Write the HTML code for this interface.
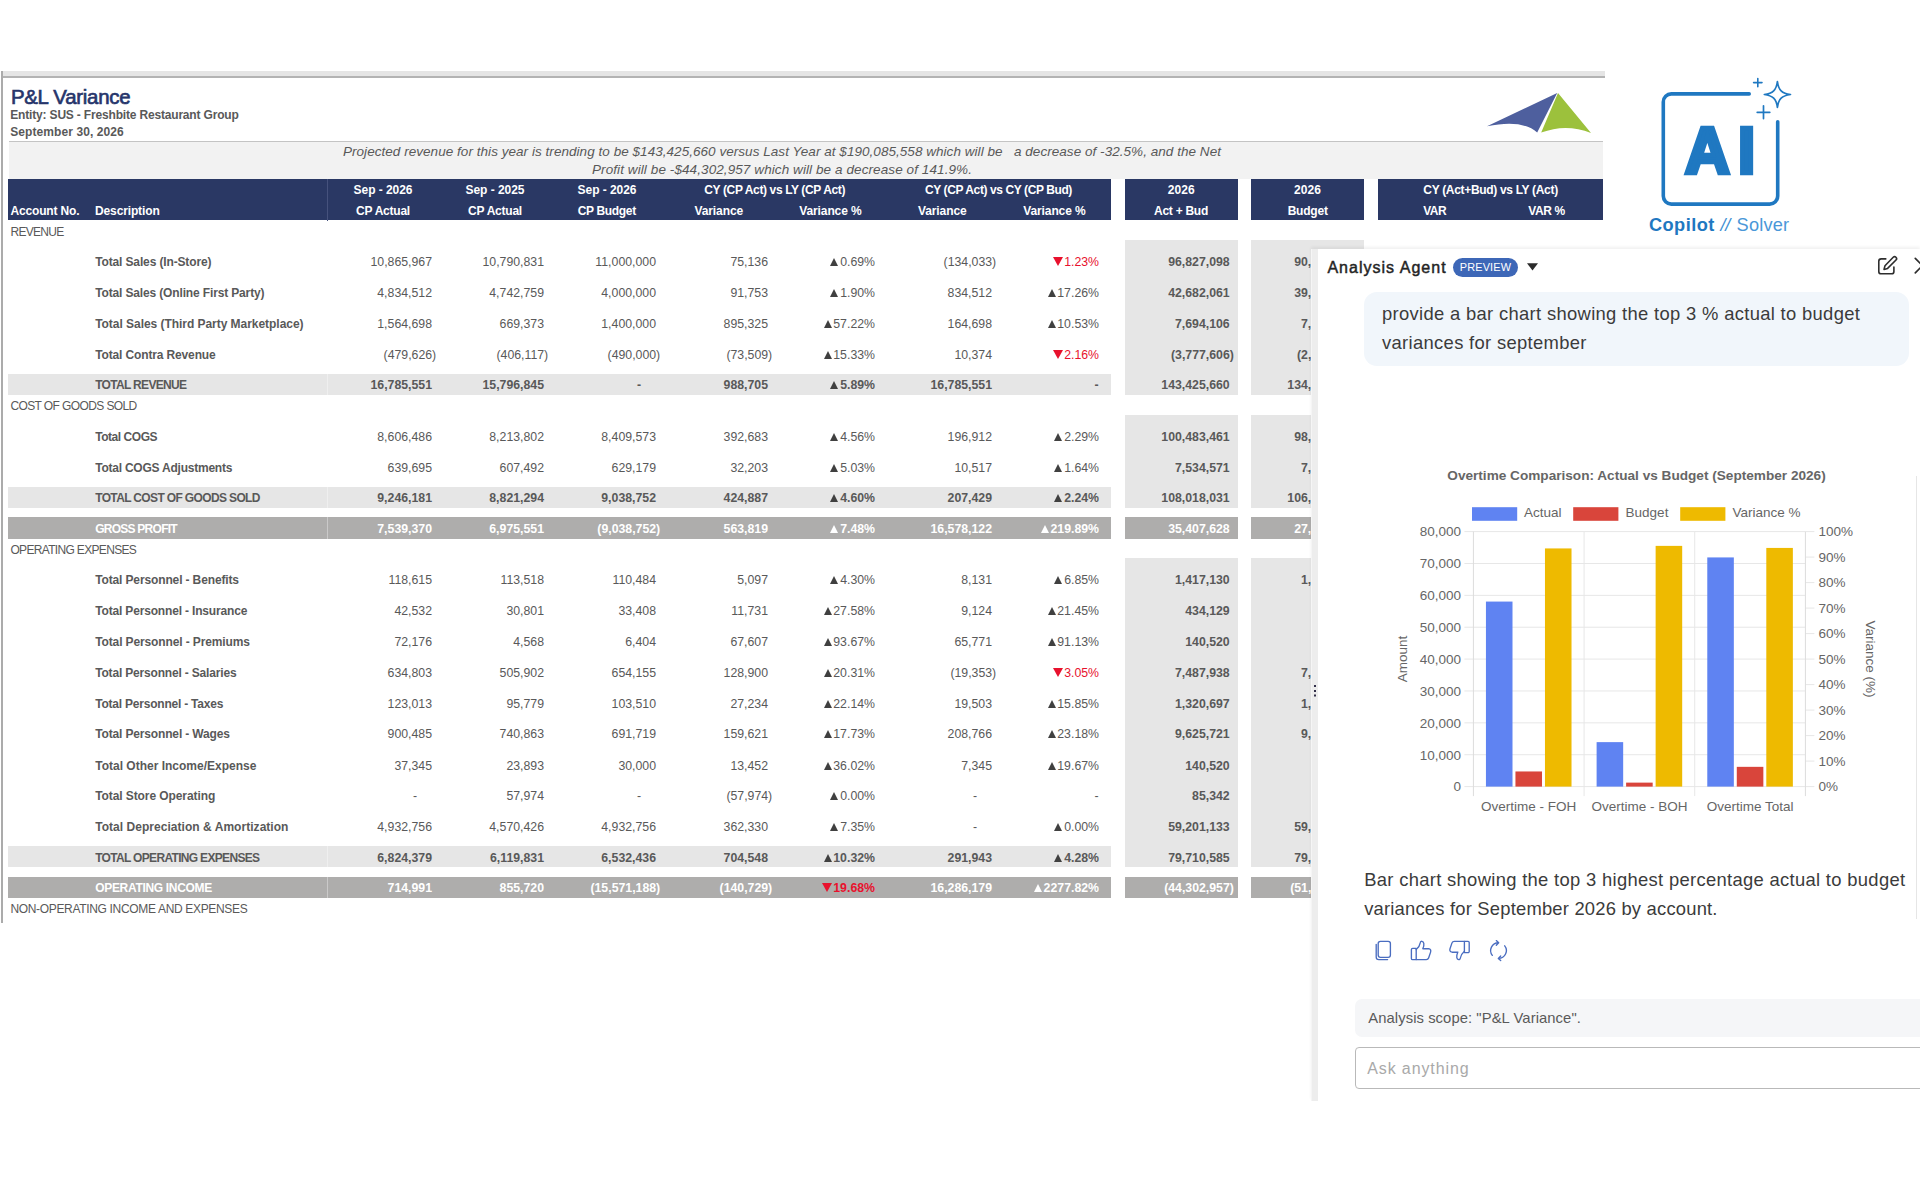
<!DOCTYPE html><html lang="en"><head><meta charset="utf-8"><title>P&amp;L Variance</title><style>
*{box-sizing:border-box;margin:0;padding:0}
html,body{width:1920px;height:1200px;background:#fff;overflow:hidden}
body{position:relative;font-family:"Liberation Sans",sans-serif;color:#595959}
.a{position:absolute;white-space:nowrap}
.t{position:absolute;white-space:nowrap;font-size:12px;height:20px;line-height:20px;color:#595959}
.n{font-size:12.3px}
.cap{font-size:12px}
.b{font-weight:bold}
.r{text-align:right}
.c{text-align:center}
.w{color:#fff}
.red{color:#e8112d}
.h{position:absolute;white-space:nowrap;font-size:12px;font-weight:bold;color:#fff;height:20px;line-height:20px}
.up,.dn{display:inline-block;width:0;height:0;border-left:4.9px solid transparent;border-right:4.9px solid transparent;margin-right:1.7px;vertical-align:baseline}
.up{border-bottom:8.6px solid #404040}
.w .up{border-bottom-color:#fff}
.dn{border-top:9px solid #e8112d;border-left-width:5px;border-right-width:5px;margin-right:1.6px}
.ch{font-size:13.5px;fill:#666;font-family:"Liberation Sans",sans-serif}
.m{position:absolute;white-space:nowrap;font-size:18.4px;line-height:29px;color:#3b3b3b}
</style></head><body>
<div class="a" style="left:1px;top:71px;width:1604px;height:5px;background:#e5e5e5;"></div>
<div class="a" style="left:1px;top:76px;width:1604px;height:2px;background:#b3b3b3;"></div>
<div class="a" style="left:1px;top:71px;width:2px;height:852px;background:#ababab;"></div>
<div class="a" id="f1" style="left:10.9px;top:86px;letter-spacing:-0.252px;font-size:20.4px;line-height:23px;color:#26356b;-webkit-text-stroke:0.65px #26356b;">P&amp;L Variance</div>
<div class="a b" id="f2" style="left:10.3px;top:108px;letter-spacing:-0.176px;font-size:12px;line-height:14px;">Entity: SUS - Freshbite Restaurant Group</div>
<div class="a b" id="f3" style="left:10.3px;top:125.4px;letter-spacing:0.073px;font-size:12px;line-height:14px;">September 30, 2026</div>
<svg class="a" style="left:1480px;top:88px" width="120" height="50" viewBox="1480 88 120 50">
<path d="M1487 126.3 L1557.2 93 L1537.2 132.6 Q1522 119 1487 126.3Z" fill="#4e5f9e"/>
<path d="M1558 93 L1591 133 Q1566 123 1541.2 132.6Z" fill="#9cc13c"/>
</svg>
<div class="a" style="left:9px;top:141px;width:1594px;height:1px;background:#c4c4c4;"></div>
<div class="a" style="left:9px;top:142px;width:1594px;height:36.6px;background:#f2f2f2;"></div>
<div class="a" style="left:582px;top:143.6px;width:400px;text-align:center;font-size:13.5px;line-height:16px;font-style:italic;height:16px;width:1000px;margin-left:-300px;"><span id="f4" style="letter-spacing:0.043px;">Projected revenue for this year is trending to be $143,425,660 versus Last Year at $190,085,558 which will be   a decrease of -32.5%, and the Net</span></div>
<div class="a" style="left:582px;top:161.6px;width:400px;text-align:center;font-size:13.5px;line-height:16px;font-style:italic;height:16px;"><span id="f5" style="letter-spacing:0.088px;">Profit will be -$44,302,957 which will be a decrease of 141.9%.</span></div>
<div class="a" style="left:8px;top:178.6px;width:1103px;height:41.9px;background:#2a3864;"></div>
<div class="a" style="left:1124.5px;top:178.6px;width:113.5px;height:41.9px;background:#2a3864;"></div>
<div class="a" style="left:1251px;top:178.6px;width:113px;height:41.9px;background:#2a3864;"></div>
<div class="a" style="left:1378px;top:178.6px;width:225px;height:41.9px;background:#2a3864;"></div>
<div class="a" style="left:327px;top:179px;width:1px;height:41.5px;background:#46527d;"></div>
<div class="h" id="f6" style="left:10.4px;top:201.1px;letter-spacing:-0.152px;">Account No.</div>
<div class="h" id="f7" style="left:95px;top:201.1px;letter-spacing:-0.129px;">Description</div>
<div class="h" style="left:183px;top:180.1px;width:400px;text-align:center;"><span id="f8" style="letter-spacing:-0.058px;">Sep - 2026</span></div>
<div class="h" style="left:183px;top:201.1px;width:400px;text-align:center;"><span id="f9" style="letter-spacing:-0.246px;">CP Actual</span></div>
<div class="h" style="left:295px;top:180.1px;width:400px;text-align:center;"><span id="f10" style="letter-spacing:-0.037px;">Sep - 2025</span></div>
<div class="h" style="left:295px;top:201.1px;width:400px;text-align:center;"><span id="f11" style="letter-spacing:-0.246px;">CP Actual</span></div>
<div class="h" style="left:407px;top:180.1px;width:400px;text-align:center;"><span id="f12" style="letter-spacing:-0.058px;">Sep - 2026</span></div>
<div class="h" style="left:406.8px;top:201.1px;width:400px;text-align:center;"><span id="f13" style="letter-spacing:-0.336px;">CP Budget</span></div>
<div class="h" style="left:574.7px;top:180.1px;width:400px;text-align:center;"><span id="f14" style="letter-spacing:-0.377px;">CY (CP Act) vs LY (CP Act)</span></div>
<div class="h" style="left:518.8px;top:201.1px;width:400px;text-align:center;"><span id="f15" style="letter-spacing:-0.072px;">Variance</span></div>
<div class="h" style="left:630.4px;top:201.1px;width:400px;text-align:center;"><span id="f16" style="letter-spacing:-0.117px;">Variance %</span></div>
<div class="h" style="left:798.5px;top:180.1px;width:400px;text-align:center;"><span id="f17" style="letter-spacing:-0.403px;">CY (CP Act) vs CY (CP Bud)</span></div>
<div class="h" style="left:742.3px;top:201.1px;width:400px;text-align:center;"><span id="f18" style="letter-spacing:-0.072px;">Variance</span></div>
<div class="h" style="left:854.4px;top:201.1px;width:400px;text-align:center;"><span id="f19" style="letter-spacing:-0.117px;">Variance %</span></div>
<div class="h" style="left:981.2px;top:180.1px;width:400px;text-align:center;"><span id="f20" style="letter-spacing:0.074px;">2026</span></div>
<div class="h" style="left:981px;top:201.1px;width:400px;text-align:center;"><span id="f21" style="letter-spacing:-0.260px;">Act + Bud</span></div>
<div class="h" style="left:1107.6px;top:180.1px;width:400px;text-align:center;"><span id="f22" style="letter-spacing:0.074px;">2026</span></div>
<div class="h" style="left:1107.7px;top:201.1px;width:400px;text-align:center;"><span id="f23" style="letter-spacing:-0.221px;">Budget</span></div>
<div class="h" style="left:1290.6px;top:180.1px;width:400px;text-align:center;"><span id="f24" style="letter-spacing:-0.319px;">CY (Act+Bud) vs LY (Act)</span></div>
<div class="h" style="left:1234.7px;top:201.1px;width:400px;text-align:center;"><span id="f25" style="letter-spacing:-0.518px;">VAR</span></div>
<div class="h" style="left:1346.5px;top:201.1px;width:400px;text-align:center;"><span id="f26" style="letter-spacing:-0.411px;">VAR %</span></div>
<div class="a" style="left:1124.5px;top:240px;width:113.5px;height:154.5px;background:#e6e6e6;"></div>
<div class="a" style="left:1251px;top:240px;width:113px;height:154.5px;background:#e6e6e6;"></div>
<div class="a" style="left:1124.5px;top:414.5px;width:113.5px;height:93px;background:#e6e6e6;"></div>
<div class="a" style="left:1251px;top:414.5px;width:113px;height:93px;background:#e6e6e6;"></div>
<div class="a" style="left:1124.5px;top:517px;width:113.5px;height:21.5px;background:#aeadac;"></div>
<div class="a" style="left:1251px;top:517px;width:113px;height:21.5px;background:#aeadac;"></div>
<div class="a" style="left:1124.5px;top:558px;width:113.5px;height:309px;background:#e6e6e6;"></div>
<div class="a" style="left:1251px;top:558px;width:113px;height:309px;background:#e6e6e6;"></div>
<div class="a" style="left:1124.5px;top:876.5px;width:113.5px;height:21.5px;background:#aeadac;"></div>
<div class="a" style="left:1251px;top:876.5px;width:113px;height:21.5px;background:#aeadac;"></div>
<div class="a" style="left:8px;top:373.5px;width:1103px;height:21px;background:#e6e6e6;"></div>
<div class="a" style="left:8px;top:486.5px;width:1103px;height:21px;background:#e6e6e6;"></div>
<div class="a" style="left:8px;top:517px;width:1103px;height:21.5px;background:#aeadac;"></div>
<div class="a" style="left:8px;top:846px;width:1103px;height:21px;background:#e6e6e6;"></div>
<div class="a" style="left:8px;top:876.5px;width:1103px;height:21.5px;background:#aeadac;"></div>
<div class="a" style="left:327px;top:373.5px;width:1px;height:21px;background:rgba(255,255,255,0.35);"></div>
<div class="a" style="left:327px;top:486.5px;width:1px;height:21px;background:rgba(255,255,255,0.35);"></div>
<div class="a" style="left:327px;top:517px;width:1px;height:21.5px;background:rgba(255,255,255,0.35);"></div>
<div class="a" style="left:327px;top:846px;width:1px;height:21px;background:rgba(255,255,255,0.35);"></div>
<div class="a" style="left:327px;top:876.5px;width:1px;height:21.5px;background:rgba(255,255,255,0.35);"></div>
<div class="t cap" id="f27" style="left:10.4px;top:221.6px;letter-spacing:-0.674px;">REVENUE</div>
<div class="t b" id="f28" style="left:95.2px;top:252.4px;letter-spacing:-0.134px;">Total Sales (In-Store)</div>
<div class="t n r" style="left:322px;top:252.4px;width:110px">10,865,967</div>
<div class="t n r" style="left:434px;top:252.4px;width:110px">10,790,831</div>
<div class="t n r" style="left:546px;top:252.4px;width:110px">11,000,000</div>
<div class="t n r" style="left:658px;top:252.4px;width:110px">75,136</div>
<div class="t n r" style="left:775px;top:252.4px;width:100px"><span class="up"></span>0.69%</div>
<div class="t n r" style="left:886.2px;top:252.4px;width:110px">(134,033)</div>
<div class="t n r red" style="left:999px;top:252.4px;width:100px"><span class="dn"></span>1.23%</div>
<div class="t n r b" style="left:1119.7px;top:252.4px;width:110px">96,827,098</div>
<div class="t n r b" style="left:1245.7px;top:252.4px;width:110px">90,412,733</div>
<div class="t b" id="f29" style="left:95.2px;top:283.1px;letter-spacing:-0.145px;">Total Sales (Online First Party)</div>
<div class="t n r" style="left:322px;top:283.1px;width:110px">4,834,512</div>
<div class="t n r" style="left:434px;top:283.1px;width:110px">4,742,759</div>
<div class="t n r" style="left:546px;top:283.1px;width:110px">4,000,000</div>
<div class="t n r" style="left:658px;top:283.1px;width:110px">91,753</div>
<div class="t n r" style="left:775px;top:283.1px;width:100px"><span class="up"></span>1.90%</div>
<div class="t n r" style="left:882px;top:283.1px;width:110px">834,512</div>
<div class="t n r" style="left:999px;top:283.1px;width:100px"><span class="up"></span>17.26%</div>
<div class="t n r b" style="left:1119.7px;top:283.1px;width:110px">42,682,061</div>
<div class="t n r b" style="left:1245.7px;top:283.1px;width:110px">39,847,549</div>
<div class="t b" id="f30" style="left:95.2px;top:313.6px;letter-spacing:-0.042px;">Total Sales (Third Party Marketplace)</div>
<div class="t n r" style="left:322px;top:313.6px;width:110px">1,564,698</div>
<div class="t n r" style="left:434px;top:313.6px;width:110px">669,373</div>
<div class="t n r" style="left:546px;top:313.6px;width:110px">1,400,000</div>
<div class="t n r" style="left:658px;top:313.6px;width:110px">895,325</div>
<div class="t n r" style="left:775px;top:313.6px;width:100px"><span class="up"></span>57.22%</div>
<div class="t n r" style="left:882px;top:313.6px;width:110px">164,698</div>
<div class="t n r" style="left:999px;top:313.6px;width:100px"><span class="up"></span>10.53%</div>
<div class="t n r b" style="left:1119.7px;top:313.6px;width:110px">7,694,106</div>
<div class="t n r b" style="left:1245.7px;top:313.6px;width:110px">7,529,408</div>
<div class="t b" id="f31" style="left:95.2px;top:344.7px;letter-spacing:-0.137px;">Total Contra Revenue</div>
<div class="t n r" style="left:326.2px;top:344.7px;width:110px">(479,626)</div>
<div class="t n r" style="left:438.2px;top:344.7px;width:110px">(406,117)</div>
<div class="t n r" style="left:550.2px;top:344.7px;width:110px">(490,000)</div>
<div class="t n r" style="left:662.2px;top:344.7px;width:110px">(73,509)</div>
<div class="t n r" style="left:775px;top:344.7px;width:100px"><span class="up"></span>15.33%</div>
<div class="t n r" style="left:882px;top:344.7px;width:110px">10,374</div>
<div class="t n r red" style="left:999px;top:344.7px;width:100px"><span class="dn"></span>2.16%</div>
<div class="t n r b" style="left:1123.9px;top:344.7px;width:110px">(3,777,606)</div>
<div class="t n r b" style="left:1249.9px;top:344.7px;width:110px">(2,787,980)</div>
<div class="t b cap" id="f32" style="left:95.2px;top:374.9px;letter-spacing:-0.678px;">TOTAL REVENUE</div>
<div class="t n r b" style="left:322px;top:374.9px;width:110px">16,785,551</div>
<div class="t n r b" style="left:434px;top:374.9px;width:110px">15,796,845</div>
<div class="t n r b" style="left:531px;top:374.9px;width:110px">-</div>
<div class="t n r b" style="left:658px;top:374.9px;width:110px">988,705</div>
<div class="t n r b" style="left:775px;top:374.9px;width:100px"><span class="up"></span>5.89%</div>
<div class="t n r b" style="left:882px;top:374.9px;width:110px">16,785,551</div>
<div class="t n r b" style="left:998.5px;top:374.9px;width:100px">-</div>
<div class="t n r b" style="left:1119.7px;top:374.9px;width:110px">143,425,660</div>
<div class="t n r b" style="left:1245.7px;top:374.9px;width:110px">134,001,710</div>
<div class="t cap" id="f33" style="left:10.4px;top:396.1px;letter-spacing:-0.602px;">COST OF GOODS SOLD</div>
<div class="t b" id="f34" style="left:95.2px;top:426.8px;letter-spacing:-0.445px;">Total COGS</div>
<div class="t n r" style="left:322px;top:426.8px;width:110px">8,606,486</div>
<div class="t n r" style="left:434px;top:426.8px;width:110px">8,213,802</div>
<div class="t n r" style="left:546px;top:426.8px;width:110px">8,409,573</div>
<div class="t n r" style="left:658px;top:426.8px;width:110px">392,683</div>
<div class="t n r" style="left:775px;top:426.8px;width:100px"><span class="up"></span>4.56%</div>
<div class="t n r" style="left:882px;top:426.8px;width:110px">196,912</div>
<div class="t n r" style="left:999px;top:426.8px;width:100px"><span class="up"></span>2.29%</div>
<div class="t n r b" style="left:1119.7px;top:426.8px;width:110px">100,483,461</div>
<div class="t n r b" style="left:1245.7px;top:426.8px;width:110px">98,286,549</div>
<div class="t b" id="f35" style="left:95.2px;top:457.8px;letter-spacing:-0.228px;">Total COGS Adjustments</div>
<div class="t n r" style="left:322px;top:457.8px;width:110px">639,695</div>
<div class="t n r" style="left:434px;top:457.8px;width:110px">607,492</div>
<div class="t n r" style="left:546px;top:457.8px;width:110px">629,179</div>
<div class="t n r" style="left:658px;top:457.8px;width:110px">32,203</div>
<div class="t n r" style="left:775px;top:457.8px;width:100px"><span class="up"></span>5.03%</div>
<div class="t n r" style="left:882px;top:457.8px;width:110px">10,517</div>
<div class="t n r" style="left:999px;top:457.8px;width:100px"><span class="up"></span>1.64%</div>
<div class="t n r b" style="left:1119.7px;top:457.8px;width:110px">7,534,571</div>
<div class="t n r b" style="left:1245.7px;top:457.8px;width:110px">7,524,054</div>
<div class="t b cap" id="f36" style="left:95.2px;top:487.9px;letter-spacing:-0.642px;">TOTAL COST OF GOODS SOLD</div>
<div class="t n r b" style="left:322px;top:487.9px;width:110px">9,246,181</div>
<div class="t n r b" style="left:434px;top:487.9px;width:110px">8,821,294</div>
<div class="t n r b" style="left:546px;top:487.9px;width:110px">9,038,752</div>
<div class="t n r b" style="left:658px;top:487.9px;width:110px">424,887</div>
<div class="t n r b" style="left:775px;top:487.9px;width:100px"><span class="up"></span>4.60%</div>
<div class="t n r b" style="left:882px;top:487.9px;width:110px">207,429</div>
<div class="t n r b" style="left:999px;top:487.9px;width:100px"><span class="up"></span>2.24%</div>
<div class="t n r b" style="left:1119.7px;top:487.9px;width:110px">108,018,031</div>
<div class="t n r b" style="left:1245.7px;top:487.9px;width:110px">106,810,603</div>
<div class="t b w cap" id="f37" style="left:95.2px;top:518.5px;letter-spacing:-0.749px;">GROSS PROFIT</div>
<div class="t n r b w" style="left:322px;top:518.5px;width:110px">7,539,370</div>
<div class="t n r b w" style="left:434px;top:518.5px;width:110px">6,975,551</div>
<div class="t n r b w" style="left:550.2px;top:518.5px;width:110px">(9,038,752)</div>
<div class="t n r b w" style="left:658px;top:518.5px;width:110px">563,819</div>
<div class="t n r b w" style="left:775px;top:518.5px;width:100px"><span class="up"></span>7.48%</div>
<div class="t n r b w" style="left:882px;top:518.5px;width:110px">16,578,122</div>
<div class="t n r b w" style="left:999px;top:518.5px;width:100px"><span class="up"></span>219.89%</div>
<div class="t n r b w" style="left:1119.7px;top:518.5px;width:110px">35,407,628</div>
<div class="t n r b w" style="left:1245.7px;top:518.5px;width:110px">27,191,107</div>
<div class="t cap" id="f38" style="left:10.4px;top:540.1px;letter-spacing:-0.667px;">OPERATING EXPENSES</div>
<div class="t b" id="f39" style="left:95.2px;top:570.3px;letter-spacing:-0.132px;">Total Personnel - Benefits</div>
<div class="t n r" style="left:322px;top:570.3px;width:110px">118,615</div>
<div class="t n r" style="left:434px;top:570.3px;width:110px">113,518</div>
<div class="t n r" style="left:546px;top:570.3px;width:110px">110,484</div>
<div class="t n r" style="left:658px;top:570.3px;width:110px">5,097</div>
<div class="t n r" style="left:775px;top:570.3px;width:100px"><span class="up"></span>4.30%</div>
<div class="t n r" style="left:882px;top:570.3px;width:110px">8,131</div>
<div class="t n r" style="left:999px;top:570.3px;width:100px"><span class="up"></span>6.85%</div>
<div class="t n r b" style="left:1119.7px;top:570.3px;width:110px">1,417,130</div>
<div class="t n r b" style="left:1245.7px;top:570.3px;width:110px">1,408,999</div>
<div class="t b" id="f40" style="left:95.2px;top:601.2px;letter-spacing:-0.166px;">Total Personnel - Insurance</div>
<div class="t n r" style="left:322px;top:601.2px;width:110px">42,532</div>
<div class="t n r" style="left:434px;top:601.2px;width:110px">30,801</div>
<div class="t n r" style="left:546px;top:601.2px;width:110px">33,408</div>
<div class="t n r" style="left:658px;top:601.2px;width:110px">11,731</div>
<div class="t n r" style="left:775px;top:601.2px;width:100px"><span class="up"></span>27.58%</div>
<div class="t n r" style="left:882px;top:601.2px;width:110px">9,124</div>
<div class="t n r" style="left:999px;top:601.2px;width:100px"><span class="up"></span>21.45%</div>
<div class="t n r b" style="left:1119.7px;top:601.2px;width:110px">434,129</div>
<div class="t n r b" style="left:1245.7px;top:601.2px;width:110px">425,005</div>
<div class="t b" id="f41" style="left:95.2px;top:632px;letter-spacing:-0.124px;">Total Personnel - Premiums</div>
<div class="t n r" style="left:322px;top:632px;width:110px">72,176</div>
<div class="t n r" style="left:434px;top:632px;width:110px">4,568</div>
<div class="t n r" style="left:546px;top:632px;width:110px">6,404</div>
<div class="t n r" style="left:658px;top:632px;width:110px">67,607</div>
<div class="t n r" style="left:775px;top:632px;width:100px"><span class="up"></span>93.67%</div>
<div class="t n r" style="left:882px;top:632px;width:110px">65,771</div>
<div class="t n r" style="left:999px;top:632px;width:100px"><span class="up"></span>91.13%</div>
<div class="t n r b" style="left:1119.7px;top:632px;width:110px">140,520</div>
<div class="t n r b" style="left:1245.7px;top:632px;width:110px">74,749</div>
<div class="t b" id="f42" style="left:95.2px;top:662.9px;letter-spacing:-0.178px;">Total Personnel - Salaries</div>
<div class="t n r" style="left:322px;top:662.9px;width:110px">634,803</div>
<div class="t n r" style="left:434px;top:662.9px;width:110px">505,902</div>
<div class="t n r" style="left:546px;top:662.9px;width:110px">654,155</div>
<div class="t n r" style="left:658px;top:662.9px;width:110px">128,900</div>
<div class="t n r" style="left:775px;top:662.9px;width:100px"><span class="up"></span>20.31%</div>
<div class="t n r" style="left:886.2px;top:662.9px;width:110px">(19,353)</div>
<div class="t n r red" style="left:999px;top:662.9px;width:100px"><span class="dn"></span>3.05%</div>
<div class="t n r b" style="left:1119.7px;top:662.9px;width:110px">7,487,938</div>
<div class="t n r b" style="left:1245.7px;top:662.9px;width:110px">7,507,291</div>
<div class="t b" id="f43" style="left:95.2px;top:693.6px;letter-spacing:-0.215px;">Total Personnel - Taxes</div>
<div class="t n r" style="left:322px;top:693.6px;width:110px">123,013</div>
<div class="t n r" style="left:434px;top:693.6px;width:110px">95,779</div>
<div class="t n r" style="left:546px;top:693.6px;width:110px">103,510</div>
<div class="t n r" style="left:658px;top:693.6px;width:110px">27,234</div>
<div class="t n r" style="left:775px;top:693.6px;width:100px"><span class="up"></span>22.14%</div>
<div class="t n r" style="left:882px;top:693.6px;width:110px">19,503</div>
<div class="t n r" style="left:999px;top:693.6px;width:100px"><span class="up"></span>15.85%</div>
<div class="t n r b" style="left:1119.7px;top:693.6px;width:110px">1,320,697</div>
<div class="t n r b" style="left:1245.7px;top:693.6px;width:110px">1,301,194</div>
<div class="t b" id="f44" style="left:95.2px;top:724.4px;letter-spacing:-0.149px;">Total Personnel - Wages</div>
<div class="t n r" style="left:322px;top:724.4px;width:110px">900,485</div>
<div class="t n r" style="left:434px;top:724.4px;width:110px">740,863</div>
<div class="t n r" style="left:546px;top:724.4px;width:110px">691,719</div>
<div class="t n r" style="left:658px;top:724.4px;width:110px">159,621</div>
<div class="t n r" style="left:775px;top:724.4px;width:100px"><span class="up"></span>17.73%</div>
<div class="t n r" style="left:882px;top:724.4px;width:110px">208,766</div>
<div class="t n r" style="left:999px;top:724.4px;width:100px"><span class="up"></span>23.18%</div>
<div class="t n r b" style="left:1119.7px;top:724.4px;width:110px">9,625,721</div>
<div class="t n r b" style="left:1245.7px;top:724.4px;width:110px">9,416,955</div>
<div class="t b" id="f45" style="left:95.2px;top:755.7px;letter-spacing:0.002px;">Total Other Income/Expense</div>
<div class="t n r" style="left:322px;top:755.7px;width:110px">37,345</div>
<div class="t n r" style="left:434px;top:755.7px;width:110px">23,893</div>
<div class="t n r" style="left:546px;top:755.7px;width:110px">30,000</div>
<div class="t n r" style="left:658px;top:755.7px;width:110px">13,452</div>
<div class="t n r" style="left:775px;top:755.7px;width:100px"><span class="up"></span>36.02%</div>
<div class="t n r" style="left:882px;top:755.7px;width:110px">7,345</div>
<div class="t n r" style="left:999px;top:755.7px;width:100px"><span class="up"></span>19.67%</div>
<div class="t n r b" style="left:1119.7px;top:755.7px;width:110px">140,520</div>
<div class="t n r b" style="left:1245.7px;top:755.7px;width:110px">133,175</div>
<div class="t b" id="f46" style="left:95.2px;top:786.1px;letter-spacing:-0.086px;">Total Store Operating</div>
<div class="t n r" style="left:307px;top:786.1px;width:110px">-</div>
<div class="t n r" style="left:434px;top:786.1px;width:110px">57,974</div>
<div class="t n r" style="left:531px;top:786.1px;width:110px">-</div>
<div class="t n r" style="left:662.2px;top:786.1px;width:110px">(57,974)</div>
<div class="t n r" style="left:775px;top:786.1px;width:100px"><span class="up"></span>0.00%</div>
<div class="t n r" style="left:867px;top:786.1px;width:110px">-</div>
<div class="t n r" style="left:998.5px;top:786.1px;width:100px">-</div>
<div class="t n r b" style="left:1119.7px;top:786.1px;width:110px">85,342</div>
<div class="t n r b" style="left:1245.7px;top:786.1px;width:110px">85,342</div>
<div class="t b" id="f47" style="left:95.2px;top:817.1px;letter-spacing:0.039px;">Total Depreciation &amp; Amortization</div>
<div class="t n r" style="left:322px;top:817.1px;width:110px">4,932,756</div>
<div class="t n r" style="left:434px;top:817.1px;width:110px">4,570,426</div>
<div class="t n r" style="left:546px;top:817.1px;width:110px">4,932,756</div>
<div class="t n r" style="left:658px;top:817.1px;width:110px">362,330</div>
<div class="t n r" style="left:775px;top:817.1px;width:100px"><span class="up"></span>7.35%</div>
<div class="t n r" style="left:867px;top:817.1px;width:110px">-</div>
<div class="t n r" style="left:999px;top:817.1px;width:100px"><span class="up"></span>0.00%</div>
<div class="t n r b" style="left:1119.7px;top:817.1px;width:110px">59,201,133</div>
<div class="t n r b" style="left:1245.7px;top:817.1px;width:110px">59,201,133</div>
<div class="t b cap" id="f48" style="left:95.2px;top:847.5px;letter-spacing:-0.679px;">TOTAL OPERATING EXPENSES</div>
<div class="t n r b" style="left:322px;top:847.5px;width:110px">6,824,379</div>
<div class="t n r b" style="left:434px;top:847.5px;width:110px">6,119,831</div>
<div class="t n r b" style="left:546px;top:847.5px;width:110px">6,532,436</div>
<div class="t n r b" style="left:658px;top:847.5px;width:110px">704,548</div>
<div class="t n r b" style="left:775px;top:847.5px;width:100px"><span class="up"></span>10.32%</div>
<div class="t n r b" style="left:882px;top:847.5px;width:110px">291,943</div>
<div class="t n r b" style="left:999px;top:847.5px;width:100px"><span class="up"></span>4.28%</div>
<div class="t n r b" style="left:1119.7px;top:847.5px;width:110px">79,710,585</div>
<div class="t n r b" style="left:1245.7px;top:847.5px;width:110px">79,418,642</div>
<div class="t b w cap" id="f49" style="left:95.2px;top:878.2px;letter-spacing:-0.318px;">OPERATING INCOME</div>
<div class="t n r b w" style="left:322px;top:878.2px;width:110px">714,991</div>
<div class="t n r b w" style="left:434px;top:878.2px;width:110px">855,720</div>
<div class="t n r b w" style="left:550.2px;top:878.2px;width:110px">(15,571,188)</div>
<div class="t n r b w" style="left:662.2px;top:878.2px;width:110px">(140,729)</div>
<div class="t n r b red" style="left:775px;top:878.2px;width:100px"><span class="dn"></span>19.68%</div>
<div class="t n r b w" style="left:882px;top:878.2px;width:110px">16,286,179</div>
<div class="t n r b w" style="left:999px;top:878.2px;width:100px"><span class="up"></span>2277.82%</div>
<div class="t n r b w" style="left:1123.9px;top:878.2px;width:110px">(44,302,957)</div>
<div class="t n r b w" style="left:1249.9px;top:878.2px;width:110px">(51,227,535)</div>
<div class="t cap" id="f50" style="left:10.4px;top:899.3px;letter-spacing:-0.328px;">NON-OPERATING INCOME AND EXPENSES</div>
<svg class="a" style="left:1640px;top:70px" width="170" height="150" viewBox="1640 70 170 150">
<path d="M1749.2 93.9 H1671.3 a8 8 0 0 0 -8 8 V196.1 a8 8 0 0 0 8 8 H1769.7 a8 8 0 0 0 8 -8 V121.7" fill="none" stroke="#1f78c1" stroke-width="3.6" stroke-linecap="round"/>
<text transform="translate(1683.7 0) scale(0.95 1)" x="1.5 57.3" y="172.7" font-family="Liberation Sans, sans-serif" font-weight="bold" font-size="65.2" fill="#1f78c1" stroke="#1f78c1" stroke-width="4.4" stroke-linejoin="miter">AI</text>
<path d="M1753.6 82.6 H1762 M1757.8 78.6 V86.8" stroke="#1f78c1" stroke-width="1.6" stroke-linecap="round" fill="none"/>
<path d="M1757.2 112.3 H1769.8 M1763.5 105.8 V118.6" stroke="#1f78c1" stroke-width="1.7" stroke-linecap="round" fill="none"/>
<path d="M1777.4 81.5 C1778.4 90 1782 93.5 1790.5 94.5 C1782 95.5 1778.4 99 1777.4 107.5 C1776.4 99 1772.8 95.5 1764.3 94.5 C1772.8 93.5 1776.4 90 1777.4 81.5Z" fill="#fff" stroke="#1f78c1" stroke-width="1.7" stroke-linejoin="round"/>
</svg>
<div class="a b" id="f51" style="left:1649px;top:213.4px;font-size:18.2px;line-height:24px;color:#1f78c1;letter-spacing:0.437px;">Copilot</div>
<div class="a" style="left:1720.5px;top:213.4px;font-size:18.2px;line-height:24px;color:#3f8fd3;font-style:italic;letter-spacing:-0.4px">//</div>
<div class="a" id="f52" style="left:1736.6px;top:213.4px;font-size:18.2px;line-height:24px;color:#4a97d8;letter-spacing:0.206px;">Solver</div>
<div class="a" style="left:1311px;top:249px;width:609px;height:852px;background:#fff;box-shadow:0 -2px 3px rgba(0,0,0,0.06)"></div>
<div class="a" style="left:1311px;top:249px;width:7px;height:852px;background:linear-gradient(90deg,#f5f5f5 0,#f5f5f5 1px,#ededed 1px,#ededed 100%)"></div>
<div class="a" style="left:1314px;top:685px;width:2px;height:2px;background:#33304a;box-shadow:0 5px 0 #33304a,0 9.5px 0 #33304a"></div>
<div class="a" id="f53" style="left:1327.4px;top:255.6px;font-size:16px;line-height:24px;color:#242424;-webkit-text-stroke:0.45px #242424;letter-spacing:1.018px;">Analysis Agent</div>
<div class="a c" style="left:1453px;top:258px;width:65px;height:18.5px;border-radius:10px;background:#3d67b7;color:#fff;font-size:10.9px;line-height:18.7px"><span id="f54" style="letter-spacing:0.152px;">PREVIEW</span></div>
<svg class="a" style="left:1526px;top:262px" width="14" height="10" viewBox="0 0 14 10"><path d="M1 1.3 H12 L6.5 8.6Z" fill="#2b2b2b"/></svg>
<svg class="a" style="left:1874px;top:253px" width="26" height="26" viewBox="1874 253 26 26"><path d="M1885.8 258.9 H1881.2 a2.4 2.4 0 0 0 -2.4 2.4 V271.4 a2.4 2.4 0 0 0 2.4 2.4 H1891.5 a2.4 2.4 0 0 0 2.4 -2.4 V267" fill="none" stroke="#2e2e2e" stroke-width="1.6" stroke-linecap="round"/><path d="M1893.2 257.3 a1.9 1.9 0 0 1 2.8 2.7 L1887.6 268.4 L1884 269.4 L1885 265.8 Z" fill="none" stroke="#2e2e2e" stroke-width="1.6" stroke-linejoin="round"/></svg>
<svg class="a" style="left:1910px;top:254px" width="10" height="24" viewBox="1910 254 10 24"><path d="M1915.3 258.4 L1922.5 265.6 L1915.3 272.8" fill="none" stroke="#2e2e2e" stroke-width="1.7" stroke-linecap="round"/></svg>
<div class="a" style="left:1363.5px;top:291.5px;width:545.5px;height:74.5px;border-radius:13px;background:#f1f6fb"></div>
<div class="m" id="f55" style="left:1382px;top:299.4px;letter-spacing:0.324px;">provide a bar chart showing the top 3 % actual to budget</div>
<div class="m" id="f56" style="left:1382px;top:328.4px;letter-spacing:0.327px;">variances for september</div>
<svg class="a" style="left:1380px;top:455px" width="530" height="380" viewBox="1380 455 530 380" font-family="Liberation Sans, sans-serif">
<path d="M1464.4 786.60 H1805.4" stroke="#e7e7e7" stroke-width="1"/>
<path d="M1464.4 754.73 H1805.4" stroke="#e7e7e7" stroke-width="1"/>
<path d="M1464.4 722.85 H1805.4" stroke="#e7e7e7" stroke-width="1"/>
<path d="M1464.4 690.98 H1805.4" stroke="#e7e7e7" stroke-width="1"/>
<path d="M1464.4 659.10 H1805.4" stroke="#e7e7e7" stroke-width="1"/>
<path d="M1464.4 627.23 H1805.4" stroke="#e7e7e7" stroke-width="1"/>
<path d="M1464.4 595.35 H1805.4" stroke="#e7e7e7" stroke-width="1"/>
<path d="M1464.4 563.48 H1805.4" stroke="#e7e7e7" stroke-width="1"/>
<path d="M1464.4 531.60 H1805.4" stroke="#e7e7e7" stroke-width="1"/>
<path d="M1805.4 786.60 H1814.4" stroke="#e7e7e7" stroke-width="1"/>
<path d="M1805.4 761.10 H1814.4" stroke="#e7e7e7" stroke-width="1"/>
<path d="M1805.4 735.60 H1814.4" stroke="#e7e7e7" stroke-width="1"/>
<path d="M1805.4 710.10 H1814.4" stroke="#e7e7e7" stroke-width="1"/>
<path d="M1805.4 684.60 H1814.4" stroke="#e7e7e7" stroke-width="1"/>
<path d="M1805.4 659.10 H1814.4" stroke="#e7e7e7" stroke-width="1"/>
<path d="M1805.4 633.60 H1814.4" stroke="#e7e7e7" stroke-width="1"/>
<path d="M1805.4 608.10 H1814.4" stroke="#e7e7e7" stroke-width="1"/>
<path d="M1805.4 582.60 H1814.4" stroke="#e7e7e7" stroke-width="1"/>
<path d="M1805.4 557.10 H1814.4" stroke="#e7e7e7" stroke-width="1"/>
<path d="M1805.4 531.60 H1814.4" stroke="#e7e7e7" stroke-width="1"/>
<path d="M1473.40 531.6 V796.1" stroke="#dcdcdc" stroke-width="1"/>
<path d="M1584.07 531.6 V796.1" stroke="#e7e7e7" stroke-width="1"/>
<path d="M1694.73 531.6 V796.1" stroke="#e7e7e7" stroke-width="1"/>
<path d="M1805.40 531.6 V796.1" stroke="#dcdcdc" stroke-width="1"/>
<rect x="1485.94" y="601.57" width="26.56" height="185.03" fill="#5f83f2"/>
<rect x="1515.45" y="771.46" width="26.56" height="15.14" fill="#d9453b"/>
<rect x="1544.96" y="548.43" width="26.56" height="238.17" fill="#eeba00"/>
<rect x="1596.61" y="742.13" width="26.56" height="44.47" fill="#5f83f2"/>
<rect x="1626.12" y="782.62" width="26.56" height="3.98" fill="#d9453b"/>
<rect x="1655.63" y="545.88" width="26.56" height="240.72" fill="#eeba00"/>
<rect x="1707.28" y="557.42" width="26.56" height="229.18" fill="#5f83f2"/>
<rect x="1736.79" y="766.84" width="26.56" height="19.76" fill="#d9453b"/>
<rect x="1766.30" y="547.92" width="26.56" height="238.68" fill="#eeba00"/>
<text class="ch" x="1461.0" y="791.4" text-anchor="end">0</text>
<text class="ch" x="1461.0" y="759.5" text-anchor="end">10,000</text>
<text class="ch" x="1461.0" y="727.6" text-anchor="end">20,000</text>
<text class="ch" x="1461.0" y="695.8" text-anchor="end">30,000</text>
<text class="ch" x="1461.0" y="663.9" text-anchor="end">40,000</text>
<text class="ch" x="1461.0" y="632.0" text-anchor="end">50,000</text>
<text class="ch" x="1461.0" y="600.1" text-anchor="end">60,000</text>
<text class="ch" x="1461.0" y="568.3" text-anchor="end">70,000</text>
<text class="ch" x="1461.0" y="536.4" text-anchor="end">80,000</text>
<text class="ch" x="1818.6" y="791.4">0%</text>
<text class="ch" x="1818.6" y="765.9">10%</text>
<text class="ch" x="1818.6" y="740.4">20%</text>
<text class="ch" x="1818.6" y="714.9">30%</text>
<text class="ch" x="1818.6" y="689.4">40%</text>
<text class="ch" x="1818.6" y="663.9">50%</text>
<text class="ch" x="1818.6" y="638.4">60%</text>
<text class="ch" x="1818.6" y="612.9">70%</text>
<text class="ch" x="1818.6" y="587.4">80%</text>
<text class="ch" x="1818.6" y="561.9">90%</text>
<text class="ch" x="1818.6" y="536.4">100%</text>
<text class="ch" x="1528.7" y="811.3" text-anchor="middle">Overtime - FOH</text>
<text class="ch" x="1639.4" y="811.3" text-anchor="middle">Overtime - BOH</text>
<text class="ch" x="1750.1" y="811.3" text-anchor="middle">Overtime Total</text>
<text class="ch" transform="translate(1407 659) rotate(-90)" text-anchor="middle">Amount</text>
<text class="ch" transform="translate(1865.5 659) rotate(90)" text-anchor="middle">Variance (%)</text>
<text id="ctitle" x="1636.5" y="479.8" text-anchor="middle" font-size="13.62" font-weight="bold" fill="#666">Overtime Comparison: Actual vs Budget (September 2026)</text>
<rect x="1472" y="507.2" width="45.2" height="13.6" fill="#5f83f2"/><text class="ch" x="1524" y="517.1">Actual</text>
<rect x="1573.2" y="507.2" width="45.2" height="13.6" fill="#d9453b"/><text class="ch" x="1625.6" y="517.1">Budget</text>
<rect x="1680.2" y="507.2" width="45.2" height="13.6" fill="#eeba00"/><text class="ch" x="1732.6" y="517.1">Variance %</text>
</svg>
<div class="m" id="f57" style="left:1364.2px;top:864.8px;letter-spacing:0.314px;">Bar chart showing the top 3 highest percentage actual to budget</div>
<div class="m" id="f58" style="left:1364.2px;top:893.9px;letter-spacing:0.199px;">variances for September 2026 by account.</div>
<svg class="a" style="left:1370px;top:936px" width="145" height="30" viewBox="1370 936 145 30" fill="none" stroke="#4a6dc0" stroke-width="1.35" stroke-linecap="round" stroke-linejoin="round">
<rect x="1378.2" y="941.3" width="12.2" height="16" rx="2.2"/><path d="M1376.2 944.3 V957 a2.6 2.6 0 0 0 2.6 2.6 H1387.6"/>
<path d="M1412.6 948.3 H1416.2 V959.6 H1412.6 a1.2 1.2 0 0 1 -1.2 -1.2 V949.5 a1.2 1.2 0 0 1 1.2 -1.2Z"/><path d="M1416.2 949.6 C1418.6 947.6 1420 944.8 1420.4 942.4 C1420.6 940.8 1423.3 940.8 1423.8 943.3 C1424.2 945.3 1423.4 947.4 1422.8 948.7 H1428.6 C1430.6 948.9 1431.1 950.6 1430.6 952.1 L1428.6 958 C1428.2 959.1 1427.4 959.6 1426.3 959.6 H1416.2"/>
<path d="M1464.4 941.3 H1468 a1.2 1.2 0 0 1 1.2 1.2 V951.4 a1.2 1.2 0 0 1 -1.2 1.2 H1464.4Z"/><path d="M1464.4 951.3 C1462 953.3 1460.6 956.1 1460.2 958.5 C1460 960.1 1457.3 960.1 1456.8 957.6 C1456.4 955.6 1457.2 953.5 1457.8 952.2 H1452 C1450 952 1449.5 950.3 1450 948.8 L1452 942.9 C1452.4 941.8 1453.2 941.3 1454.3 941.3 H1464.4"/>
<path d="M1492.3 955.4 A7.8 7.8 0 0 1 1498.5 942.8 M1496.3 940.6 L1498.7 942.8 L1496.3 945.2"/><path d="M1504.7 945.8 A7.8 7.8 0 0 1 1498.5 958.4 M1500.7 956 L1498.3 958.4 L1500.7 960.6"/>
</svg>
<div class="a" style="left:1355px;top:999px;width:580px;height:38px;border-radius:7px;background:#f5f6f8"></div>
<div class="a" id="f59" style="left:1368.3px;top:1005.8px;font-size:14.8px;line-height:24px;color:#5a5a5a;letter-spacing:0.072px;">Analysis scope: "P&amp;L Variance".</div>
<div class="a" style="left:1355px;top:1047px;width:580px;height:42px;border:1px solid #b9b9b9;border-radius:4px;background:#fff"></div>
<div class="a" id="f60" style="left:1367.2px;top:1056.6px;font-size:16px;line-height:24px;color:#a9a9a9;letter-spacing:0.891px;">Ask anything</div>
<div class="a" style="left:1916px;top:476px;width:1px;height:443px;background:#e6e6e6"></div>
</body></html>
